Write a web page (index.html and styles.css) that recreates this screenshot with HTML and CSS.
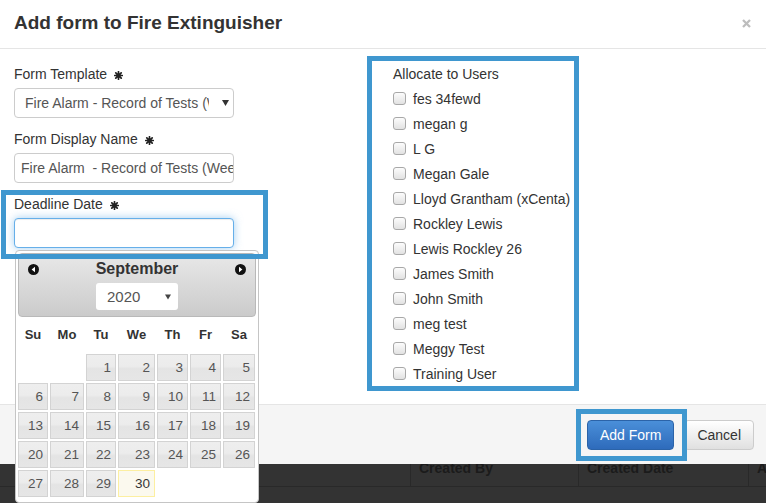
FILE: index.html
```html
<!DOCTYPE html>
<html>
<head>
<meta charset="utf-8">
<link rel="stylesheet" href="styles.css">
</head>
<body>
<div class="modal">
  <div class="modal-header">
    <h4 class="title">Add form to Fire Extinguisher</h4>
    <svg class="close" width="9" height="9" viewBox="0 0 9 9"><path d="M1 1L8 8M8 1L1 8" stroke="#bdbdbd" stroke-width="2.3"/></svg>
  </div>
  <div class="modal-body">
    <div class="col-left">
      <div class="group">
        <label class="lbl">Form Template<svg class="ast" width="9" height="9" viewBox="0 0 10 10"><path d="M5 0.8V9.2M0.8 5H9.2M2 2L8 8M8 2L2 8" stroke="#222" stroke-width="1.9" stroke-linecap="round"/></svg></label>
        <div class="field select"><span class="txt">Fire Alarm - Record of Tests (Weekly)</span><svg class="arr" width="7" height="6" viewBox="0 0 7 6"><path d="M0 0H7L3.5 6Z" fill="#333"/></svg></div>
      </div>
      <div class="group">
        <label class="lbl">Form Display Name<svg class="ast" width="9" height="9" viewBox="0 0 10 10"><path d="M5 0.8V9.2M0.8 5H9.2M2 2L8 8M8 2L2 8" stroke="#222" stroke-width="1.9" stroke-linecap="round"/></svg></label>
        <div class="field input">Fire Alarm &nbsp;- Record of Tests (Weekly)</div>
      </div>
      <div class="group">
        <label class="lbl">Deadline Date<svg class="ast" width="9" height="9" viewBox="0 0 10 10"><path d="M5 0.8V9.2M0.8 5H9.2M2 2L8 8M8 2L2 8" stroke="#222" stroke-width="1.9" stroke-linecap="round"/></svg></label>
        <div class="field input focus"></div>
      </div>
    </div>
    <div class="col-right">
      <div class="lbl lbl-users">Allocate to Users</div>
      <ul class="users">
        <li><span class="cb"></span>fes 34fewd</li>
        <li><span class="cb"></span>megan g</li>
        <li><span class="cb"></span>L G</li>
        <li><span class="cb"></span>Megan Gale</li>
        <li><span class="cb"></span>Lloyd Grantham (xCenta)</li>
        <li><span class="cb"></span>Rockley Lewis</li>
        <li><span class="cb"></span>Lewis Rockley 26</li>
        <li><span class="cb"></span>James Smith</li>
        <li><span class="cb"></span>John Smith</li>
        <li><span class="cb"></span>meg test</li>
        <li><span class="cb"></span>Meggy Test</li>
        <li><span class="cb"></span>Training User</li>
      </ul>
    </div>
  </div>
  <div class="modal-footer">
    <button class="btn btn-primary">Add Form</button>
    <button class="btn btn-default">Cancel</button>
  </div>
</div>
<div class="bg-table">
  <div class="cell"><span></span></div>
  <div class="cell"><span>Created By</span></div>
  <div class="cell"><span>Created Date</span></div>
  <div class="cell"><span>A</span></div>
</div>

<div class="dp">
  <div class="dp-header">
    <div class="dp-title">
      <svg width="11" height="11" viewBox="0 0 11 11"><circle cx="5.5" cy="5.5" r="5.5" fill="#111"/><path d="M7 2.8L3.6 5.5L7 8.2Z" fill="#fff"/></svg>
      <span class="month">September</span>
      <svg width="11" height="11" viewBox="0 0 11 11"><circle cx="5.5" cy="5.5" r="5.5" fill="#111"/><path d="M4 2.8L7.4 5.5L4 8.2Z" fill="#fff"/></svg>
    </div>
    <div class="dp-year"><span>2020</span><svg width="6" height="6" viewBox="0 0 6 6"><path d="M0 0.5H6L3 5.5Z" fill="#444"/></svg></div>
  </div>
  <div class="dp-grid dp-names">
    <span>Su</span><span>Mo</span><span>Tu</span><span>We</span><span>Th</span><span>Fr</span><span>Sa</span>
  </div>
  <div class="dp-grid dp-days">
    <span class="d first">1</span><span class="d">2</span><span class="d">3</span><span class="d">4</span><span class="d">5</span>
    <span class="d">6</span><span class="d">7</span><span class="d">8</span><span class="d">9</span><span class="d">10</span><span class="d">11</span><span class="d">12</span>
    <span class="d">13</span><span class="d">14</span><span class="d">15</span><span class="d">16</span><span class="d">17</span><span class="d">18</span><span class="d">19</span>
    <span class="d">20</span><span class="d">21</span><span class="d">22</span><span class="d">23</span><span class="d">24</span><span class="d">25</span><span class="d">26</span>
    <span class="d">27</span><span class="d">28</span><span class="d">29</span><span class="d today">30</span>
  </div>
</div>

<div class="hl hl-deadline"></div>
<div class="hl hl-users"></div>
<div class="hl hl-add"></div>
</body>
</html>
```
FILE: styles.css
```css
* { box-sizing: border-box; }
html, body { margin: 0; padding: 0; }
body {
  background: #333;
  font-family: "Liberation Sans", Arial, sans-serif;
  font-size: 14px;
  color: #333;
  width: 766px;
  height: 503px;
  overflow: hidden;
  position: relative;
}

.modal { background: #fff; }

.modal-header {
  height: 49px;
  border-bottom: 1px solid #e5e5e5;
  display: flex;
  align-items: center;
  justify-content: space-between;
  padding: 0 15px 2px 14px;
}
.title {
  margin: 0;
  font-size: 19px;
  font-weight: bold;
  line-height: 22px;
  color: #333;
}
.close { display: block; }

.modal-body {
  display: flex;
  padding: 15px 14px 18px;
}
.col-left { width: 220px; }
.group { margin-bottom: 11px; }
.lbl {
  display: block;
  line-height: 20px;
  margin-bottom: 4px;
  color: #333;
}
.ast { margin-left: 7px; vertical-align: -1px; }

.field {
  height: 30px;
  border: 1px solid #ccc;
  border-radius: 4px;
  color: #555;
  line-height: 28px;
  white-space: nowrap;
  overflow: hidden;
  background: #fff;
}
.select {
  display: flex;
  align-items: center;
  padding-left: 10px;
}
.select .txt {
  width: 184px;
  overflow: hidden;
  flex: none;
}
.select .arr { margin-left: 13px; flex: none; }
.input { padding-left: 6px; }
.focus {
  border-color: #66afe9;
  box-shadow: inset 0 1px 1px rgba(0,0,0,.075), 0 0 8px rgba(102,175,233,.6);
}

.col-right { margin-left: 159px; }
.lbl-users { margin-bottom: 2px; }
.users { list-style: none; margin: 0; padding: 0; }
.users li {
  height: 25px;
  display: flex;
  align-items: center;
  color: #333;
}
.cb {
  width: 13px;
  height: 13px;
  border: 1px solid #a8a8a8;
  border-radius: 3px;
  background: linear-gradient(#fcfcfc, #e2e2e2);
  margin-right: 7px;
  flex: none;
}

.modal-footer {
  background: #f5f5f5;
  border-top: 1px solid #e5e5e5;
  height: 60px;
  padding: 15px 12px 0 0;
  display: flex;
  justify-content: flex-end;
  align-items: flex-start;
  gap: 10px;
}
.btn {
  height: 30px;
  padding: 0 12px;
  font-family: "Liberation Sans", Arial, sans-serif;
  font-size: 14px;
  border-radius: 4px;
  border: 1px solid;
  line-height: 28px;
}
.btn-primary {
  color: #fff;
  background: linear-gradient(#4a8fd9, #2e6bbb);
  border-color: #2b63a8;
}
.btn-default {
  color: #333;
  background: linear-gradient(#fff, #e0e0e0);
  border-color: #ccc;
}

.bg-table {
  display: grid;
  grid-template-columns: 410px 168px 170px 18px;
  height: 39px;
}
.cell {
  height: 23px;
  border-bottom: 1px solid #292929;
  border-left: 1px solid #292929;
  padding-left: 8px;
  overflow: hidden;
  font-weight: bold;
  color: #1b1b1b;
  white-space: nowrap;
}
.cell:first-child { border-left: none; }
.cell span { display: block; line-height: 16px; margin-top: -4px; }

/* datepicker popup */
.dp {
  position: absolute;
  left: 15px;
  top: 250px;
  width: 244px;
  height: 253px;
  border: 1px solid #c5c5c5;
  border-radius: 4px;
  background: #fff;
  padding: 2px;
  z-index: 2;
}
.dp-header {
  height: 64px;
  border: 1px solid #b9b9b9;
  border-radius: 4px;
  background: linear-gradient(#e8e8e8, #cbcbcb);
  padding-top: 5px;
}
.dp-title {
  display: flex;
  align-items: center;
  justify-content: space-between;
  height: 20px;
  padding: 0 9px 0 9px;
}
.dp-title svg { display: block; }
.month { font-size: 16px; font-weight: bold; color: #333; line-height: 20px; }
.dp-year {
  width: 82px;
  height: 27px;
  margin: 4px auto 0;
  background: #fff;
  border-radius: 3px;
  display: flex;
  align-items: center;
  padding-left: 11px;
  font-size: 15px;
  color: #555;
}
.dp-year svg { margin-left: 25px; }

.dp-grid {
  display: grid;
  grid-template-columns: 30px 34px 30px 37px 31px 31px 32px;
  column-gap: 2px;
}
.dp-names {
  height: 36px;
  line-height: 36px;
  text-align: center;
  font-weight: bold;
  font-size: 13px;
  color: #333;
  margin-bottom: 1px;
}
.dp-days {
  row-gap: 2px;
  grid-auto-rows: 27px;
}
.d {
  border: 1px solid #d3d3d3;
  background: linear-gradient(#eeeeee 0%, #ececec 45%, #e4e4e4 55%, #e6e6e6 100%);
  text-align: right;
  padding-right: 4px;
  line-height: 25px;
  color: #555;
  font-size: 13.5px;
}
.d.first { grid-column-start: 3; }
.d.today {
  border-color: #fcefa1;
  background: #fbf9ee;
  color: #363636;
}

/* annotation boxes drawn over the screenshot */
.hl {
  position: absolute;
  border: 5px solid #3f97cf;
  z-index: 3;
}
.hl-deadline { left: 1px; top: 190px; width: 267px; height: 69px; }
.hl-users { left: 367px; top: 56px; width: 212px; height: 335px; }
.hl-add { left: 576px; top: 409px; width: 111px; height: 52px; }
```
